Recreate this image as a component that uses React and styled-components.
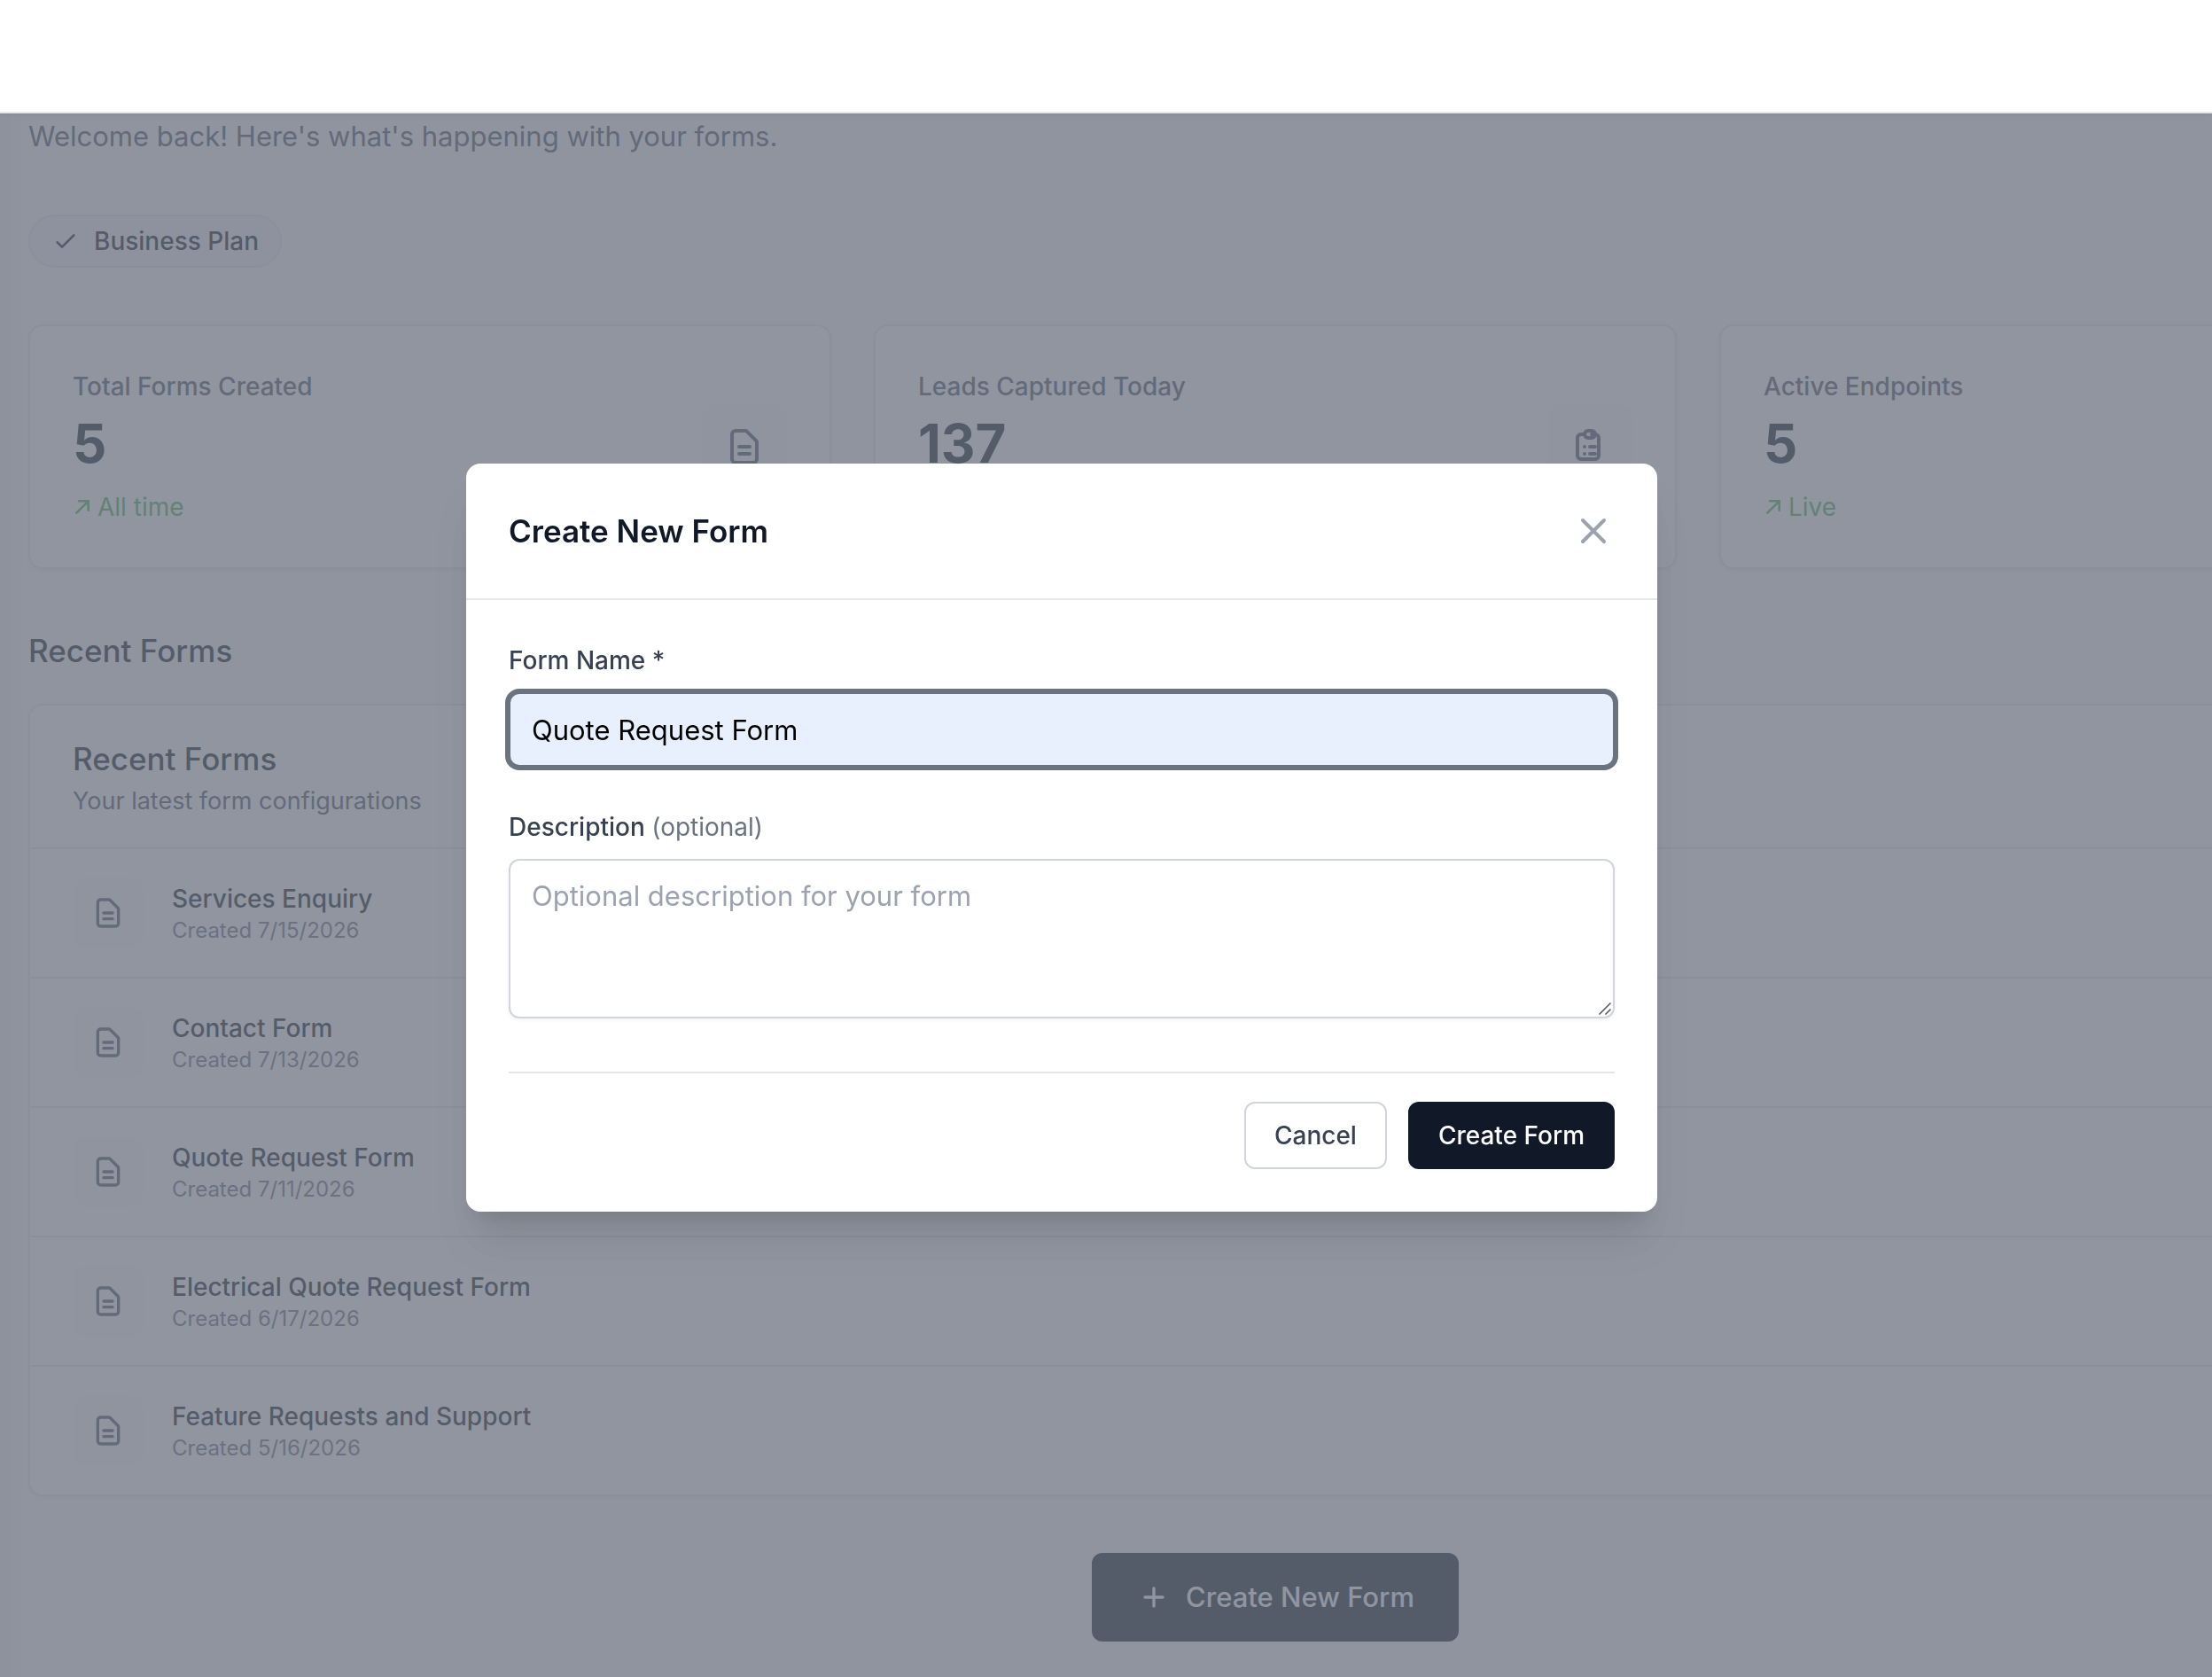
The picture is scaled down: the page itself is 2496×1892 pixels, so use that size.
import { useState } from 'react'
import styled, { createGlobalStyle } from 'styled-components'

const GlobalStyle = createGlobalStyle`
  *, *::before, *::after {
    box-sizing: border-box;
  }
  body {
    margin: 0;
    background: #f9fafb;
    color: #111827;
    font-family: Inter, "Liberation Sans", sans-serif;
    font-size: 31px;
    line-height: 48px;
    -webkit-font-smoothing: antialiased;
  }
  h2, h3, p, ul {
    margin: 0;
    padding: 0;
  }
  button, input, textarea {
    font-family: inherit;
  }
`
const Page = styled.div`
  min-height: 100vh;
  overflow: hidden;
`
const TopBar = styled.header`
  position: relative;
  z-index: 20;
  height: 128px;
  background: white;
  border-bottom: 2px solid #e5e7eb;
  box-shadow: 0 2px 4px rgba(0, 0, 0, 0.05);
`
const Main = styled.main`
  display: flex;
  flex-direction: column;
  align-items: flex-start;
  min-width: 2878px;
  padding: 2px 32px 40px;
  background: linear-gradient(to right, #f1f2f3, #f9fafb 28px);
`
const Welcome = styled.p`
  color: #4b5563;
`
const PlanBadge = styled.div`
  display: flex;
  align-items: center;
  gap: 16px;
  margin: 64px 0;
  padding: 8px 24px;
  border: 2px solid #e5e7eb;
  border-radius: 30px;
  background: #f3f4f6;
  font-size: 28px;
  line-height: 40px;
  font-weight: 500;
`
const Stats = styled.section`
  display: grid;
  grid-template-columns: repeat(3, 1fr);
  gap: 48px;
  width: 100%;
`
const Card = styled.div`
  background: white;
  border: 2px solid #e5e7eb;
  border-radius: 16px;
  box-shadow: 0 2px 4px rgba(0, 0, 0, 0.05);
`
const StatCard = styled(Card)`
  display: flex;
  align-items: center;
  justify-content: space-between;
  padding: 48px;
`
const StatLabel = styled.p`
  color: #4b5563;
  font-size: 28px;
  line-height: 40px;
  font-weight: 500;
`
const StatValue = styled.p`
  margin: 8px 0 16px;
  font-size: 60px;
  line-height: 72px;
  font-weight: 700;
  font-optical-sizing: none;
`
const StatNote = styled.p`
  display: flex;
  align-items: center;
  gap: 6px;
  color: #4caf50;
  font-size: 28px;
  line-height: 40px;
`
const IconBox = styled.div`
  display: flex;
  align-items: center;
  justify-content: center;
  flex-shrink: 0;
  width: ${props => props.$size}px;
  height: ${props => props.$size}px;
  border-radius: 16px;
  background: #f9fafb;
  color: #4b5563;
`
const Heading = styled.h2`
  font-size: 35px;
  line-height: 56px;
  font-weight: 500;
`
const SectionHeading = styled(Heading)`
  margin: 64px 0 32px;
`
const ListCard = styled(Card)`
  width: 100%;
`
const ListHeader = styled.div`
  padding: 32px 48px;
`
const ListHint = styled.p`
  color: #4b5563;
  font-size: 27px;
  line-height: 40px;
`
const FormList = styled.ul`
  list-style: none;
`
const FormRow = styled.li`
  display: flex;
  align-items: center;
  gap: 32px;
  padding: 32px 48px;
  border-top: 2px solid #e5e7eb;
`
const FormTitle = styled.p`
  font-size: 28px;
  line-height: 40px;
  font-weight: 500;
`
const FormDate = styled.p`
  color: #6b7280;
  font-size: 24px;
  line-height: 32px;
`
const Button = styled.button`
  display: flex;
  align-items: center;
  gap: 16px;
  padding: 16px 32px;
  border: 2px solid ${props => props.$primary ? '#111827' : '#d1d5db'};
  border-radius: 12px;
  background: ${props => props.$primary ? '#111827' : 'white'};
  color: ${props => props.$primary ? 'white' : '#374151'};
  font-size: 28px;
  line-height: 40px;
  font-weight: 500;
  cursor: pointer;
`
const NewFormButton = styled(Button)`
  align-self: center;
  margin-top: 64px;
  padding: 24px 48px;
  font-size: 31px;
  line-height: 48px;
`
const Overlay = styled.div`
  position: fixed;
  inset: 0;
  z-index: 10;
  display: flex;
  align-items: center;
  justify-content: center;
  padding: 0 100px 2px 0;
  background: rgba(107, 114, 128, 0.75);
`
const Dialog = styled.div`
  width: 100%;
  max-width: 1344px;
  border-radius: 16px;
  background: white;
  box-shadow: 0 40px 50px -10px rgba(0, 0, 0, 0.1), 0 16px 20px -12px rgba(0, 0, 0, 0.1);
`
const DialogHeader = styled.div`
  display: flex;
  align-items: center;
  justify-content: space-between;
  padding: 48px;
  border-bottom: 2px solid #e5e7eb;
`
const DialogTitle = styled(Heading)`
  font-weight: 600;
`
const CloseButton = styled.button`
  display: flex;
  padding: 0;
  border: none;
  background: none;
  color: #9ca3af;
  cursor: pointer;
`
const DialogForm = styled.form`
  padding: 48px;
`
const Field = styled.div`
  display: flex;
  flex-direction: column;
  gap: 16px;
  margin-bottom: ${props => props.$last ? 60 : 48}px;
`
const Label = styled.label`
  color: #374151;
  font-size: 28px;
  line-height: 40px;
  font-weight: 500;
`
const Optional = styled.span`
  color: #6b7280;
  font-weight: 400;
`
const TextInput = styled.input`
  width: 100%;
  height: 84px;
  padding: 16px 24px;
  border: 2px solid #6b7280;
  border-radius: 12px;
  outline: none;
  background: #e8f0fe;
  box-shadow: 0 0 0 4px #6b7280;
  color: black;
  font-size: 31px;
  line-height: 48px;
`
const TextAreaWrapper = styled.div`
  position: relative;
  display: flex;
`
const TextArea = styled.textarea`
  width: 100%;
  padding: 16px 24px;
  border: 2px solid #d1d5db;
  border-radius: 12px;
  outline: none;
  resize: none;
  box-shadow: 0 2px 4px rgba(0, 0, 0, 0.05);
  font-size: 31px;
  line-height: 48px;
  &::placeholder {
    color: #9ca3af;
    opacity: 1;
  }
`
const Grip = styled.svg`
  position: absolute;
  right: 4px;
  bottom: 4px;
  pointer-events: none;
`
const DialogFooter = styled.div`
  display: flex;
  justify-content: flex-end;
  gap: 24px;
  padding-top: 32px;
  border-top: 2px solid #e5e7eb;
`

const icons = {
  check: 'M5 13l4 4L19 7',
  close: 'M6 18L18 6M6 6l12 12',
  plus: 'M12 6v6m0 0v6m0-6h6m-6 0H6',
  document: 'M9 12h6m-6 4h6m2 5H7a2 2 0 01-2-2V5a2 2 0 012-2h5.586a1 1 0 01.707.293l5.414 5.414a1 1 0 01.293.707V19a2 2 0 01-2 2z',
  clipboard: 'M9 5H7a2 2 0 00-2 2v10a2 2 0 002 2h8a2 2 0 002-2V7a2 2 0 00-2-2h-2M9 5a2 2 0 002 2h2a2 2 0 002-2M9 5a2 2 0 012-2h2a2 2 0 012 2m-3 7h3m-3 4h3m-6-4h.01M9 16h.01',
  bolt: 'M13 10V3L4 14h7v7l9-11h-7z'
}

const stats = [
  { label: 'Total Forms Created', value: 5, note: 'All time', icon: 'document' },
  { label: 'Leads Captured Today', value: 137, note: 'Today', icon: 'clipboard' },
  { label: 'Active Endpoints', value: 5, note: 'Live', icon: 'bolt' }
]

const forms = [
  { name: 'Services Enquiry', date: '7/15/2026' },
  { name: 'Contact Form', date: '7/13/2026' },
  { name: 'Quote Request Form', date: '7/11/2026' },
  { name: 'Electrical Quote Request Form', date: '6/17/2026' },
  { name: 'Feature Requests and Support', date: '5/16/2026' }
]

function Icon({ name, size }) {
  return (
    <svg width={size} height={size} viewBox="0 0 24 24" fill="none" stroke="currentColor" strokeWidth="2" strokeLinecap="round" strokeLinejoin="round" aria-hidden="true">
      <path d={icons[name]} />
    </svg>
  )
}

function TrendArrow() {
  return (
    <svg width="22" height="22" viewBox="0 0 22 22" fill="none" stroke="currentColor" strokeWidth="2.6" strokeLinecap="round" strokeLinejoin="round" aria-hidden="true">
      <path d="M4.3 17.7L17.7 4.3M7.3 4.3h10.4v10.4" />
    </svg>
  )
}

function CreateFormDialog({ onClose }) {
  const [name, setName] = useState('Quote Request Form')
  const [description, setDescription] = useState('')

  return (
    <Overlay>
      <Dialog role="dialog" aria-modal="true" aria-labelledby="dialog-title">
        <DialogHeader>
          <DialogTitle id="dialog-title">Create New Form</DialogTitle>
          <CloseButton type="button" aria-label="Close" onClick={onClose}>
            <Icon name="close" size={48} />
          </CloseButton>
        </DialogHeader>
        <DialogForm onSubmit={e => e.preventDefault()}>
          <Field>
            <Label htmlFor="form-name">Form Name *</Label>
            <TextInput id="form-name" type="text" value={name} onChange={e => setName(e.target.value)} />
          </Field>
          <Field $last>
            <Label htmlFor="form-description">Description <Optional>(optional)</Optional></Label>
            <TextAreaWrapper>
              <TextArea
                id="form-description"
                rows={3}
                placeholder="Optional description for your form"
                value={description}
                onChange={e => setDescription(e.target.value)}
              />
              <Grip width="14" height="14" viewBox="0 0 14 14" fill="none" stroke="#555" strokeWidth="1.5" aria-hidden="true">
                <path d="M0.5 13.5l13-13M7.5 13.5l6-6" />
              </Grip>
            </TextAreaWrapper>
          </Field>
          <DialogFooter>
            <Button type="button" onClick={onClose}>Cancel</Button>
            <Button type="submit" $primary>Create Form</Button>
          </DialogFooter>
        </DialogForm>
      </Dialog>
    </Overlay>
  )
}

function App() {
  const [open, setOpen] = useState(true)

  return (
    <Page>
      <GlobalStyle />
      <TopBar />
      <Main>
        <Welcome>Welcome back! Here's what's happening with your forms.</Welcome>
        <PlanBadge>
          <Icon name="check" size={32} />
          Business Plan
        </PlanBadge>
        <Stats>
          {stats.map(stat => (
            <StatCard key={stat.label}>
              <div>
                <StatLabel>{stat.label}</StatLabel>
                <StatValue>{stat.value}</StatValue>
                <StatNote>
                  <TrendArrow />
                  {stat.note}
                </StatNote>
              </div>
              <IconBox $size={96}>
                <Icon name={stat.icon} size={48} />
              </IconBox>
            </StatCard>
          ))}
        </Stats>
        <SectionHeading>Recent Forms</SectionHeading>
        <ListCard>
          <ListHeader>
            <Heading as="h3">Recent Forms</Heading>
            <ListHint>Your latest form configurations</ListHint>
          </ListHeader>
          <FormList>
            {forms.map(form => (
              <FormRow key={form.name}>
                <IconBox $size={80}>
                  <Icon name="document" size={40} />
                </IconBox>
                <div>
                  <FormTitle>{form.name}</FormTitle>
                  <FormDate>Created {form.date}</FormDate>
                </div>
              </FormRow>
            ))}
          </FormList>
        </ListCard>
        <NewFormButton type="button" $primary onClick={() => setOpen(true)}>
          <Icon name="plus" size={40} />
          Create New Form
        </NewFormButton>
      </Main>
      {open && <CreateFormDialog onClose={() => setOpen(false)} />}
    </Page>
  )
}

export default App
